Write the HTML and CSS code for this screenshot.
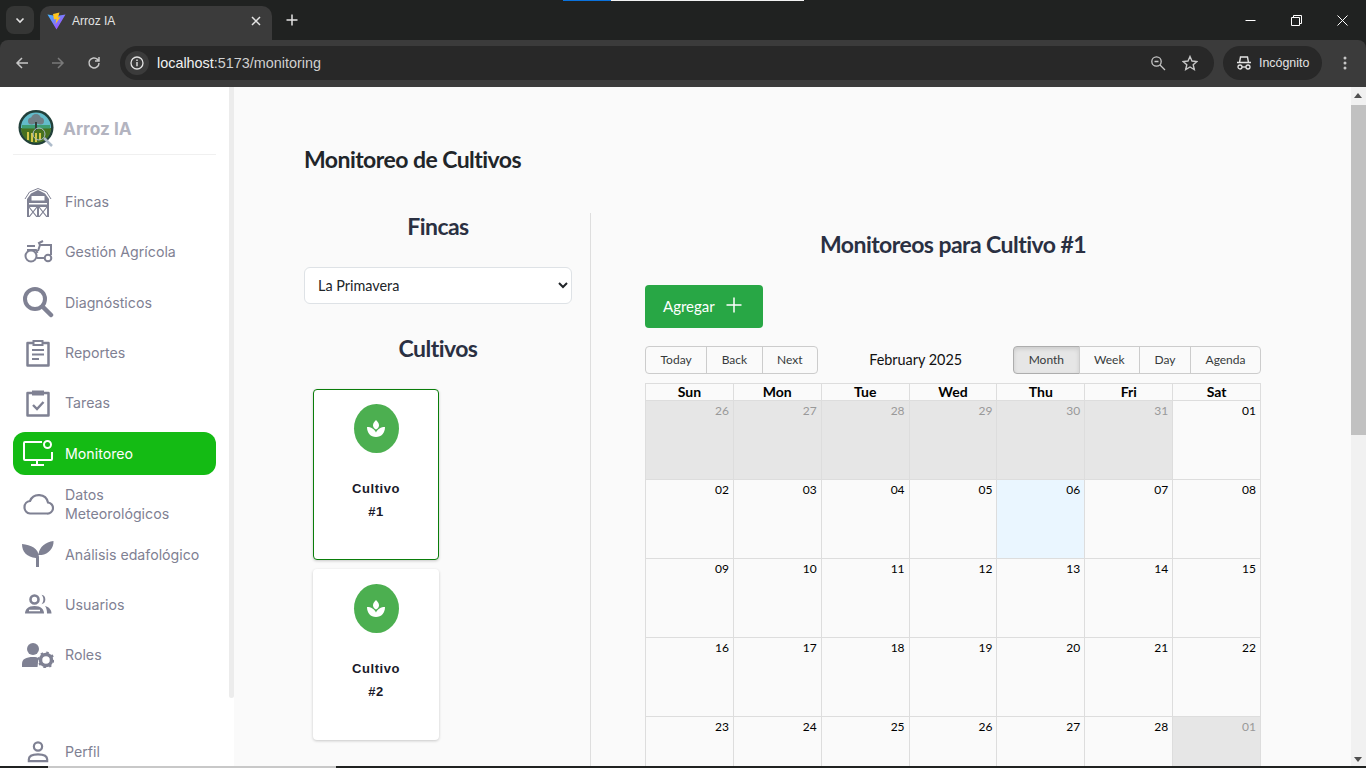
FILE: index.html
```html
<!DOCTYPE html>
<html lang="en">
<head>
  <meta charset="UTF-8" />
  <title>Arroz IA</title>
  <link rel="stylesheet" href="styles.css">
</head>
<body>

<div class="share-strip"><span class="share-blue"></span><span class="share-white"></span></div>

<header class="browser">
  <div class="tabbar">
    <button class="tab-search">
      <svg width="12" height="12" viewBox="0 0 12 12"><path d="M2.500 4.500 6 8l3.500-3.500" fill="none" stroke="#e3e3e3" stroke-width="1.600"/></svg>
    </button>
    <div class="tab">
      <svg class="favicon" width="19" height="18" viewBox="0 0 19 18">
        <defs>
          <linearGradient id="vite" x1="0" y1="0" x2="1" y2="1">
            <stop offset="0" stop-color="#41b8ff"/>
            <stop offset="1" stop-color="#bd34fe"/>
          </linearGradient>
        </defs>
        <path d="M.5 2.500 9.500 4 18.500 2.500 9.500 17.500Z" fill="url(#vite)"/>
        <path d="M6 2 12.500.5 11 5.500 13.500 5 8.500 12 9.500 7 7 7.500Z" fill="#ffc61f"/>
      </svg>
      <span class="tab-title">Arroz IA</span>
      <svg class="tab-close" width="10" height="10" viewBox="0 0 10 10"><path d="M1 1l8 8M9 1l-8 8" stroke="#e3e3e3" stroke-width="1.500"/></svg>
    </div>
    <svg class="new-tab" width="12" height="12" viewBox="0 0 12 12"><path d="M6 .5v11M.5 6h11" stroke="#e3e3e3" stroke-width="1.500"/></svg>
    <div class="win-controls">
      <svg width="11" height="11" viewBox="0 0 11 11"><path d="M.5 5.500h10" stroke="#fff"/></svg>
      <svg width="11" height="11" viewBox="0 0 11 11"><path d="M.5 2.500h8v8h-8zM2.500 2.500V.5h8v8h-2" fill="none" stroke="#fff"/></svg>
      <svg width="11" height="11" viewBox="0 0 11 11"><path d="M.5.5l10 10M10.500.5l-10 10" stroke="#fff"/></svg>
    </div>
  </div>
  <div class="toolbar">
    <svg class="nav-btn" width="14" height="14" viewBox="0 0 14 14"><path d="M13 7H2M7 2 2 7l5 5" fill="none" stroke="#c7c7c7" stroke-width="1.500"/></svg>
    <svg class="nav-btn" width="14" height="14" viewBox="0 0 14 14"><path d="M1 7h11M7 2l5 5-5 5" fill="none" stroke="#7a7a7a" stroke-width="1.500"/></svg>
    <svg class="nav-btn" width="14" height="14" viewBox="0 0 14 14"><path d="M12 7a5 5 0 1 1-1.500-3.600L12 5M12 1v4H8" fill="none" stroke="#c7c7c7" stroke-width="1.500"/></svg>
    <div class="omnibox">
      <span class="site-info">
        <svg width="14" height="14" viewBox="0 0 14 14"><circle cx="7" cy="7" r="6" fill="none" stroke="#e3e3e3" stroke-width="1.300"/><path d="M7 6v4.200M7 3.600v1.400" stroke="#e3e3e3" stroke-width="1.400"/></svg>
      </span>
      <span class="url"><span class="url-host">localhost</span>:5173/monitoring</span>
      <svg class="omni-icon" width="16" height="16" viewBox="0 0 16 16"><circle cx="6.500" cy="6.500" r="4.700" fill="none" stroke="#c7c7c7" stroke-width="1.300"/><path d="M4.500 6.500h4M10 10l5 5" stroke="#c7c7c7" stroke-width="1.300"/></svg>
      <svg class="omni-icon" width="16" height="16" viewBox="0 0 16 16"><path d="M8 1.500l2 4.500 4.900.5-3.700 3.200 1.100 4.800L8 12l-4.300 2.500 1.100-4.800L1.100 6.500 6 6Z" fill="none" stroke="#c7c7c7" stroke-width="1.400"/></svg>
    </div>
    <div class="incognito">
      <svg width="16" height="14" viewBox="0 0 16 14"><path d="M4.500 1h7l1 5.500h-9ZM1 6.500h14" fill="none" stroke="#e3e3e3" stroke-width="1.400"/><circle cx="4" cy="11" r="2" fill="none" stroke="#e3e3e3" stroke-width="1.300"/><circle cx="12" cy="11" r="2" fill="none" stroke="#e3e3e3" stroke-width="1.300"/><path d="M6 11h4" stroke="#e3e3e3" stroke-width="1.300"/></svg>
      <span>Incógnito</span>
    </div>
    <svg class="menu-dots" width="4" height="14" viewBox="0 0 4 14"><circle cx="2" cy="2" r="1.500" fill="#c7c7c7"/><circle cx="2" cy="7" r="1.500" fill="#c7c7c7"/><circle cx="2" cy="12" r="1.500" fill="#c7c7c7"/></svg>
  </div>
</header>

<div class="viewport">
  <aside class="sidebar">
    <div class="brand">
      <svg class="brand-logo" width="37" height="38" viewBox="0 0 37 38">
        <circle cx="18" cy="18.500" r="17.500" fill="#22403a"/>
        <circle cx="18" cy="18.500" r="15" fill="#63bccb"/>
        <path d="M3 19h30a15 15 0 0 1-30 0Z" fill="#47701f"/>
        <path d="M4 16h28v3.500H4Z" fill="#3f9d72"/>
        <circle cx="18" cy="10" r="5" fill="#6f7f86"/>
        <circle cx="13.500" cy="12" r="3.500" fill="#6f7f86"/>
        <circle cx="22.500" cy="12" r="3.500" fill="#6f7f86"/>
        <path d="M17 13h2v8h-2Z" fill="#33403a"/>
        <path d="M10 23v8M14 24v9M18 24v9M22 24v7" stroke="#d5c64a" stroke-width="2"/>
        <circle cx="21" cy="25" r="6" fill="none" stroke="#aebccb" stroke-width="1"/>
        <path d="M26 29l8 8" stroke="#aebccb" stroke-width="2.500"/>
      </svg>
      <span class="brand-name">Arroz IA</span>
    </div>

    <nav class="nav">
      <a class="nav-item">
        <span class="nav-icon"><svg width="30" height="30" viewBox="0 0 30 30"><path d="M2 12 6.500 5 15 1.500 23.500 5 28 12" fill="none" stroke="#7f8193" stroke-width="1"/><path d="M4 12 8 6.500 15 3 22 6.500 26 12v18H4Z" fill="#7f8193"/><path d="M8.500 9h13v4.500h-13Z" fill="#fff"/><path d="M6 16h18v1.500H6Z" fill="#fff"/><path d="M6 20h8v10H6ZM16 20h8v10h-8Z" fill="#fff"/><path d="M6 20l8 10M14 20 6 30M16 20l8 10M24 20l-8 10" stroke="#7f8193" stroke-width="1.200"/></svg></span>
        <span class="nav-label">Fincas</span>
      </a>
      <a class="nav-item">
        <span class="nav-icon"><svg width="30" height="24" viewBox="0 0 30 24"><g fill="none" stroke="#7f8193" stroke-width="2"><circle cx="8" cy="16" r="5.500"/><circle cx="25" cy="18" r="3.300"/><path d="M13.500 18H21M4 10h9l1.500 3M15 11l2-6h11v10"/><path d="M4 6h8M17 5l-1-2 4-2"/></g></svg></span>
        <span class="nav-label">Gestión Agrícola</span>
      </a>
      <a class="nav-item">
        <span class="nav-icon"><svg width="32" height="32" viewBox="0 0 32 32"><circle cx="13" cy="13" r="10" fill="none" stroke="#7f8193" stroke-width="4"/><path d="M20.500 20.500 29 29" stroke="#7f8193" stroke-width="4.500" stroke-linecap="round"/></svg></span>
        <span class="nav-label">Diagnósticos</span>
      </a>
      <a class="nav-item">
        <span class="nav-icon"><svg width="26" height="28" viewBox="0 0 26 28"><path d="M8 4H2.500v22.500h21V4H18" fill="none" stroke="#7f8193" stroke-width="2.500" stroke-linejoin="round"/><path d="M8.500 2h9v4h-9Z" fill="#fff" stroke="#7f8193" stroke-width="2"/><path d="M7 11h12M7 15.500h12M7 20h7" stroke="#7f8193" stroke-width="2"/></svg></span>
        <span class="nav-label">Reportes</span>
      </a>
      <a class="nav-item">
        <span class="nav-icon"><svg width="26" height="28" viewBox="0 0 26 28"><path d="M2.500 4h21v22.500h-21Z" fill="none" stroke="#7f8193" stroke-width="2.500" stroke-linejoin="round"/><path d="M7 1.500h12v5H7Z" fill="#7f8193"/><path d="M8 16l4 4 6.500-7" fill="none" stroke="#7f8193" stroke-width="2.400"/></svg></span>
        <span class="nav-label">Tareas</span>
      </a>
      <a class="nav-item active">
        <span class="nav-icon"><svg width="32" height="28" viewBox="0 0 32 28"><path d="M20 3H3a1 1 0 0 0-1 1v16a1 1 0 0 0 1 1h26a1 1 0 0 0 1-1v-7" fill="none" stroke="#fff" stroke-width="2"/><path d="M15 21v5M9 26h13" stroke="#fff" stroke-width="2"/><circle cx="25.500" cy="5.500" r="3.500" fill="none" stroke="#fff" stroke-width="2"/></svg></span>
        <span class="nav-label">Monitoreo</span>
      </a>
      <a class="nav-item">
        <span class="nav-icon"><svg width="32" height="22" viewBox="0 0 32 22"><path d="M8 20.500h17a5.500 5.500 0 0 0 1-11A9.500 9.500 0 0 0 8 8a6.300 6.300 0 0 0 0 12.500Z" fill="none" stroke="#7f8193" stroke-width="2.200"/></svg></span>
        <span class="nav-label">Datos Meteorológicos</span>
      </a>
      <a class="nav-item">
        <span class="nav-icon"><svg width="32" height="28" viewBox="0 0 32 28"><path d="M14 27h3V17C16.500 8 9 5 0 4c0 8 5 13 14 14ZM16.500 14c1-7 7-12 15-13 .5 7-5 13-12 14l-3 0Z" fill="#7f8193"/></svg></span>
        <span class="nav-label">Análisis edafológico</span>
      </a>
      <a class="nav-item">
        <span class="nav-icon"><svg width="28" height="20" viewBox="0 0 28 20"><circle cx="10.500" cy="5.500" r="4" fill="none" stroke="#7f8193" stroke-width="2.600"/><path d="M1 19.500c0-4 3-7.500 9.500-7.500s9.500 3.500 9.500 7.500Z" fill="#7f8193"/><path d="M17.500.8a4.800 4.800 0 0 1 0 9.400c2.500-2.500 2.500-7 0-9.400ZM21 12c4 1 6.500 3.500 6.500 7.500H23c0-3-.5-5.500-2-7.500Z" fill="#7f8193"/><path d="M5 16.500h11" stroke="#fff" stroke-width="1.500"/></svg></span>
        <span class="nav-label">Usuarios</span>
      </a>
      <a class="nav-item">
        <span class="nav-icon"><svg width="32" height="26" viewBox="0 0 32 26"><circle cx="11" cy="7" r="6" fill="#7f8193"/><path d="M0 25v-3c0-5 4-7 11-7 3 0 4.500.5 5.500 1l-1 9Z" fill="#7f8193"/><circle cx="24" cy="18" r="5.500" fill="none" stroke="#7f8193" stroke-width="3.500"/><circle cx="24" cy="18" r="7.500" fill="none" stroke="#7f8193" stroke-width="1.800" stroke-dasharray="2.500 3.400"/></svg></span>
        <span class="nav-label">Roles</span>
      </a>
      <a class="nav-item nav-bottom">
        <span class="nav-icon"><svg width="22" height="22" viewBox="0 0 24 24"><circle cx="12" cy="6" r="4.500" fill="none" stroke="#7f8193" stroke-width="2.400"/><path d="M2 22v-2c0-3.500 4-5.500 10-5.500s10 2 10 5.500v2Z" fill="none" stroke="#7f8193" stroke-width="2.400"/></svg></span>
        <span class="nav-label">Perfil</span>
      </a>
    </nav>
  </aside>
  <div class="side-scroll"><div class="side-thumb"></div></div>

  <main class="main">
    <h1 class="page-title">Monitoreo de Cultivos</h1>

    <div class="columns">
      <section class="col-left">
        <h2 class="col-title">Fincas</h2>
        <select class="farm-select">
          <option>La Primavera</option>
        </select>
        <h2 class="col-title crops-title">Cultivos</h2>
        <div class="crop-list">
          <div class="crop-card selected">
            <span class="crop-icon"><svg width="20" height="20" viewBox="0 0 20 20"><path d="M10 1c2 2 3 3.500 3 5.500 0 1.500-1 3-3 4-2-1-3-2.500-3-4C7 4.500 8 3 10 1Z" fill="#fff"/><path d="M1 8c4 0 7.500 2 9 5.500C11.500 10 15 8 19 8c0 6-3.500 10-9 10S1 14 1 8Z" fill="#fff"/></svg></span>
            <p class="crop-name">Cultivo<br>#1</p>
          </div>
          <div class="crop-card">
            <span class="crop-icon"><svg width="20" height="20" viewBox="0 0 20 20"><path d="M10 1c2 2 3 3.500 3 5.500 0 1.500-1 3-3 4-2-1-3-2.500-3-4C7 4.500 8 3 10 1Z" fill="#fff"/><path d="M1 8c4 0 7.500 2 9 5.500C11.500 10 15 8 19 8c0 6-3.500 10-9 10S1 14 1 8Z" fill="#fff"/></svg></span>
            <p class="crop-name">Cultivo<br>#2</p>
          </div>
        </div>
      </section>

      <section class="col-right">
        <h2 class="cal-heading">Monitoreos para Cultivo #1</h2>
        <button class="add-btn">Agregar
          <svg class="add-plus" width="16" height="16" viewBox="0 0 16 16"><path d="M8 .5v15M.5 8h15" stroke="#fff" stroke-width="1.500"/></svg>
        </button>

        <div class="cal-toolbar">
          <div class="btn-group">
            <button>Today</button><button>Back</button><button>Next</button>
          </div>
          <span class="cal-label">February 2025</span>
          <div class="btn-group">
            <button class="on">Month</button><button>Week</button><button>Day</button><button>Agenda</button>
          </div>
        </div>

        <div class="calendar">
          <div class="cal-head">
            <span>Sun</span><span>Mon</span><span>Tue</span><span>Wed</span><span>Thu</span><span>Fri</span><span>Sat</span>
          </div>
          <div class="cal-row">
            <span class="off">26</span><span class="off">27</span><span class="off">28</span><span class="off">29</span><span class="off">30</span><span class="off">31</span><span>01</span>
          </div>
          <div class="cal-row">
            <span>02</span><span>03</span><span>04</span><span>05</span><span class="today">06</span><span>07</span><span>08</span>
          </div>
          <div class="cal-row">
            <span>09</span><span>10</span><span>11</span><span>12</span><span>13</span><span>14</span><span>15</span>
          </div>
          <div class="cal-row">
            <span>16</span><span>17</span><span>18</span><span>19</span><span>20</span><span>21</span><span>22</span>
          </div>
          <div class="cal-row">
            <span>23</span><span>24</span><span>25</span><span>26</span><span>27</span><span>28</span><span class="off">01</span>
          </div>
        </div>
      </section>
    </div>
  </main>

  <div class="page-scroll">
    <span class="arrow-up"></span>
    <div class="page-thumb"></div>
    <span class="arrow-down"></span>
  </div>
</div>

<div class="taskbar-edge"><span class="taskbar-lit"></span></div>

</body>
</html>
```

FILE: styles.css
```css
* {
  box-sizing: border-box;
}
html, body {
  height: 100%;
  margin: 0;
  overflow: hidden;
}
body {
  display: flex;
  flex-direction: column;
  font-family: "Lato", sans-serif;
  font-variant-ligatures: none;
  background-color: #fafafa;
}
svg {
  display: block;
  flex: none;
}

/* browser chrome */
.browser {
  flex: none;
  height: 87px;
  background-color: #202221;
}
.share-strip {
  position: absolute;
  top: 0;
  left: 563px;
  display: flex;
  height: 1px;
  z-index: 5;
}
.share-blue {
  width: 48px;
  background-color: #0a72dc;
}
.share-white {
  width: 193px;
  background-color: #f2f2f2;
}
.tabbar {
  display: flex;
  align-items: center;
  height: 40px;
  padding: 6px 0 0 6px;
}
.tab-search {
  display: flex;
  align-items: center;
  justify-content: center;
  width: 28px;
  height: 28px;
  margin-bottom: 6px;
  border: 0;
  border-radius: 8px;
  background-color: #353635;
}
.tab {
  display: flex;
  align-items: center;
  width: 232px;
  height: 34px;
  margin-left: 6px;
  padding: 0 11px 4px 7px;
  border-radius: 10px 10px 0 0;
  background-color: #3b3b3b;
}
.tab-title {
  flex: 1;
  margin-left: 6px;
  font-family: "Liberation Sans", sans-serif;
  font-size: 12px;
  color: #e3e3e3;
}
.new-tab {
  margin: 0 0 6px 14px;
}
.win-controls {
  display: flex;
  gap: 35px;
  margin: 0 18px 6px auto;
}
.toolbar {
  display: flex;
  align-items: center;
  height: 47px;
  padding: 0 14px 1px 15px;
  border-radius: 8px 8px 0 0;
  background-color: #3b3b3b;
}
.nav-btn {
  margin-right: 22px;
}
.omnibox {
  display: flex;
  align-items: center;
  width: 1094px;
  height: 34px;
  margin-left: -3px;
  padding: 0 16px 0 5px;
  border-radius: 17px;
  background-color: #282828;
}
.site-info {
  display: flex;
  align-items: center;
  justify-content: center;
  width: 24px;
  height: 24px;
  border-radius: 50%;
  background-color: #3b3b3b;
}
.url {
  flex: 1;
  margin-left: 8px;
  font-family: "Liberation Sans", sans-serif;
  font-size: 14.4px;
  color: #d0d0d0;
}
.url-host {
  color: #f1f1f1;
}
.omni-icon {
  margin-left: 16px;
}
.incognito {
  display: flex;
  align-items: center;
  gap: 7px;
  width: 99px;
  height: 34px;
  margin-left: 9px;
  padding-left: 13px;
  border-radius: 17px;
  background-color: #282828;
  font-family: "Liberation Sans", sans-serif;
  font-size: 12.4px;
  color: #e3e3e3;
}
.menu-dots {
  margin-left: 21px;
}

/* page area */
.viewport {
  flex: 1;
  display: flex;
  min-height: 0;
}
.sidebar {
  flex: none;
  width: 229px;
  padding: 0 13px;
  background-color: #fff;
  font-family: "Inter", sans-serif;
  color: #7f8193;
}
.side-scroll {
  flex: none;
  width: 5px;
  background-color: #fff;
}
.side-thumb {
  height: 611px;
  border-radius: 0 0 3px 3px;
  background-color: #ececec;
}
.brand {
  display: flex;
  align-items: center;
  gap: 8px;
  height: 68px;
  padding: 14px 0 0 5px;
  border-bottom: 1px solid #f0f0f0;
}
.brand-name {
  padding-top: 1px;
  font-size: 17.3px;
  font-weight: 700;
  color: #b3b4c0;
}
.nav {
  display: flex;
  flex-direction: column;
  gap: 7.37px;
  margin-top: 25px;
}
.nav-item {
  display: flex;
  align-items: center;
  height: 43px;
  border-radius: 12px;
  font-size: 14.2px;
  line-height: 19px;
}
.nav-label {
  max-width: 140px;
}
.nav-icon {
  display: flex;
  align-items: center;
  justify-content: center;
  flex: none;
  width: 52px;
  padding-right: 2px;
}
.nav-item.active {
  background-color: #14bb14;
  color: #fff;
}
.nav-bottom {
  margin-top: 46.5px;
}

.main {
  flex: 1;
  min-width: 0;
  padding: 0 36px 0 70px;
  overflow: hidden;
}
.page-title {
  margin: 58px 0 40px;
  font-size: 23px;
  font-weight: 700;
  letter-spacing: -0.55px;
  line-height: 28px;
  color: #212529;
}
.columns {
  display: flex;
}
.col-left {
  flex: none;
  width: 287px;
  padding-right: 18px;
  border-right: 1px solid #dedede;
}
.col-title {
  margin: 0;
  height: 54px;
  font-size: 23px;
  font-weight: 700;
  letter-spacing: -0.55px;
  line-height: 27px;
  text-align: center;
  color: #2a3042;
}
.farm-select {
  display: block;
  width: 100%;
  height: 37px;
  padding: 0 9px;
  border: 1px solid #dee2e6;
  border-radius: 6px;
  background-color: #fff;
  font-family: "Lato", sans-serif;
  font-size: 14.4px;
  color: #212529;
}
.crops-title {
  margin-top: 31px;
}
.crop-list {
  display: flex;
  flex-direction: column;
  gap: 9px;
  margin-left: 9px;
  width: 126px;
}
.crop-card {
  display: flex;
  flex-direction: column;
  align-items: center;
  height: 171px;
  padding-top: 15px;
  border-radius: 4px;
  background-color: #fff;
  box-shadow: 0 1px 3px rgba(0, 0, 0, 0.2);
}
.crop-card.selected {
  border: 1px solid #0a7d0a;
  padding-top: 14px;
}
.crop-icon {
  display: flex;
  align-items: center;
  justify-content: center;
  width: 45px;
  height: 49px;
  border-radius: 50%;
  background-color: #4caf50;
}
.crop-name {
  margin: 24px 0 0;
  font-family: "Liberation Sans", sans-serif;
  font-size: 13px;
  font-weight: 700;
  letter-spacing: 0.55px;
  line-height: 23px;
  text-align: center;
  color: #1a1a2a;
}

.col-right {
  flex: 1;
  padding: 17px 54px 0;
}
.cal-heading {
  margin: 0 0 27px;
  font-size: 23px;
  font-weight: 700;
  letter-spacing: -0.55px;
  line-height: 28px;
  text-align: center;
  color: #2a3042;
}
.add-btn {
  display: flex;
  align-items: center;
  gap: 11px;
  height: 43px;
  width: 118px;
  padding: 0 0 2px 18px;
  border: 0;
  border-radius: 4px;
  background-color: #28a745;
  font-family: "Lato", sans-serif;
  font-size: 15px;
  color: #fff;
}
.add-plus {
  margin-bottom: 2px;
}
.cal-toolbar {
  display: flex;
  align-items: center;
  justify-content: space-between;
  margin: 18px 0 9px;
}
.cal-label {
  padding-bottom: 2px;
  font-size: 14.4px;
  color: #111;
}
.btn-group {
  display: flex;
}
.btn-group button {
  height: 28px;
  margin-left: -1px;
  padding: 0 14.5px 2px;
  border: 1px solid #ccc;
  background-color: transparent;
  font-family: "Lato", sans-serif;
  font-size: 12px;
  color: #373a3c;
}
.btn-group button:first-child {
  margin-left: 0;
  border-radius: 4px 0 0 4px;
}
.btn-group button:last-child {
  border-radius: 0 4px 4px 0;
}
.btn-group button.on {
  background-color: #e6e6e6;
  border-color: #adadad;
  box-shadow: inset 0 2px 4px rgba(0, 0, 0, 0.12);
}

/* month view */
.calendar {
  border-top: 1px solid #ddd;
  border-right: 1px solid #ddd;
}
.cal-head,
.cal-row {
  display: grid;
  grid-template-columns: repeat(7, 1fr);
}
.cal-head {
  height: 16px;
}
.cal-head span {
  border-left: 1px solid #ddd;
  font-size: 14px;
  font-weight: 700;
  line-height: 16px;
  text-align: center;
  color: #000;
}
.cal-row {
  height: 79px;
  border-top: 1px solid #ddd;
}
.cal-row span {
  padding: 1px 4px 0 0;
  border-left: 1px solid #ddd;
  font-size: 12px;
  line-height: 18px;
  text-align: right;
  color: #000;
}
.cal-row .off {
  background-color: #e6e6e6;
  color: #999;
}
.cal-row .today {
  background-color: #eaf6ff;
}

/* page scrollbar */
.page-scroll {
  position: relative;
  flex: none;
  width: 15px;
  background-color: #f1f1f1;
}
.page-thumb {
  height: 330px;
  margin-top: 18px;
  background-color: #c1c1c1;
}
.arrow-up,
.arrow-down {
  position: absolute;
  left: 3px;
  border-left: 4.5px solid transparent;
  border-right: 4.5px solid transparent;
}
.arrow-up {
  top: 6px;
  border-bottom: 5px solid #505050;
}
.arrow-down {
  bottom: 6px;
  border-top: 5px solid #505050;
}

.taskbar-edge {
  position: absolute;
  left: 0;
  bottom: 0;
  width: 100%;
  height: 2px;
  padding-left: 48px;
  background-color: #202221;
}
.taskbar-lit {
  display: block;
  width: 288px;
  height: 2px;
  background-color: #c8c8c8;
}
```
